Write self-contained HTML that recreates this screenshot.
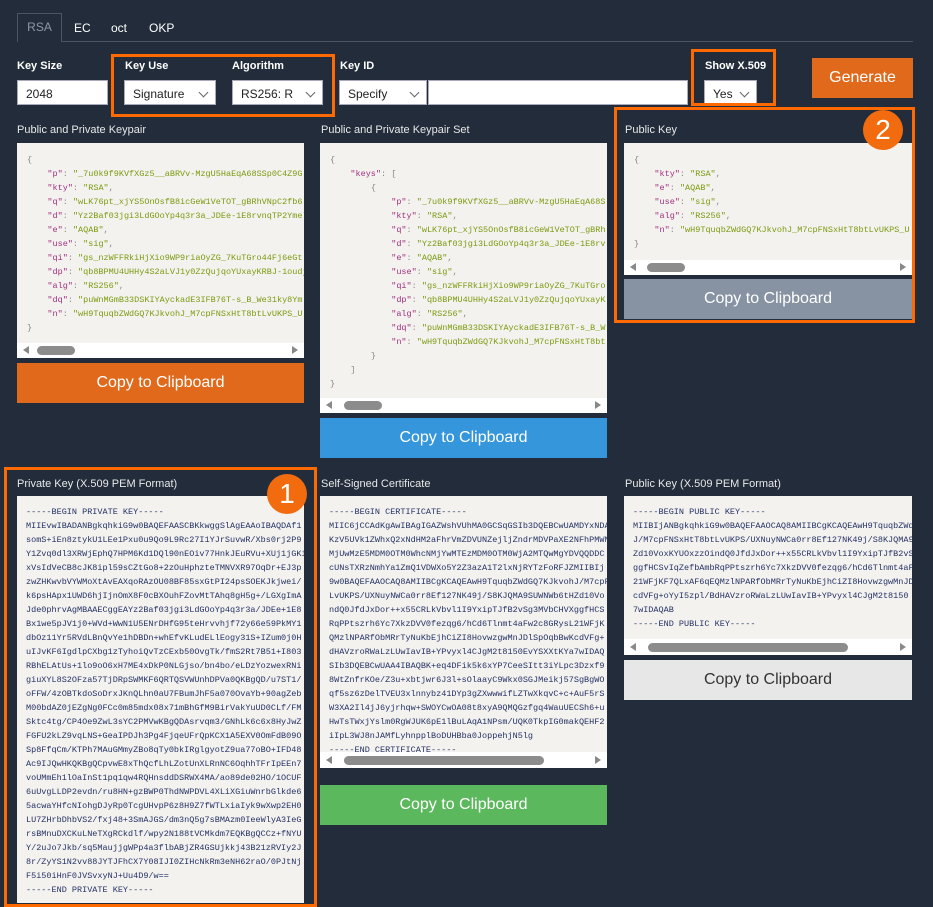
<!DOCTYPE html>
<html><head><meta charset="utf-8"><style>
*{box-sizing:border-box;margin:0;padding:0}
body{width:933px;height:903px;background:#222c3a;font-family:"Liberation Sans",Arial,sans-serif;position:relative;overflow:hidden;color:#fff}
.a{position:absolute}
.lbl{position:absolute;font-size:11px;font-weight:bold;color:#fff}
.sl{position:absolute;font-size:11px;color:#e8e8e8}
.in{position:absolute;background:#fff;border:1px solid #aab;color:#222;font-size:12px;padding:6px 8px;height:25px;white-space:nowrap;overflow:hidden}
.chev{position:absolute;right:8px;top:8px;width:7px;height:7px;border-right:1.4px solid #666;border-bottom:1.4px solid #666;transform:rotate(45deg)}
.box{position:absolute;background:#f4f2ef;overflow:hidden}
pre{font-family:"Liberation Mono",monospace;font-size:8.5px;line-height:14px;position:absolute;white-space:pre}
.k{color:#a0307f}.v{color:#7a9a10}.p{color:#888}
.pem{color:#243264}
.sb{position:absolute;left:0;right:0;bottom:0;height:15px;background:#fff}
.th{position:absolute;top:3px;height:9px;border-radius:5px;background:#8c8c8c}
.al{position:absolute;left:6px;top:3px;border-right:6px solid #888;border-top:4.5px solid transparent;border-bottom:4.5px solid transparent}
.ar{position:absolute;right:6px;top:3px;border-left:6px solid #888;border-top:4.5px solid transparent;border-bottom:4.5px solid transparent}
.btn{position:absolute;color:#fff;font-size:16px;text-align:center}
.ob{position:absolute;border:3px solid #ff6a00}
.circ{position:absolute;width:40px;height:40px;border-radius:50%;background:#f26b0f;color:#fff;font-size:28px;text-align:center;line-height:40px}
</style></head><body>
<div class="a" style="left:17px;top:41px;width:896px;height:1px;background:#4a5566"></div>
<div class="a" style="left:17px;top:13px;width:45px;height:29px;border:1px solid #4a5566;border-bottom:none;background:#222c3a;color:#8d97a5;font-size:12px;line-height:27px;text-align:center">RSA</div>
<div class="a" style="left:74px;top:21px;font-size:12px">EC</div>
<div class="a" style="left:111px;top:21px;font-size:12px">oct</div>
<div class="a" style="left:149px;top:21px;font-size:12px">OKP</div>

<div class="lbl" style="left:17px;top:60px">Key Size</div>
<div class="lbl" style="left:125px;top:60px">Key Use</div>
<div class="lbl" style="left:232px;top:60px">Algorithm</div>
<div class="lbl" style="left:340px;top:60px">Key ID</div>
<div class="lbl" style="left:705px;top:60px">Show X.509</div>
<div class="in" style="left:17px;top:80px;width:91px">2048</div>
<div class="in" style="left:124px;top:80px;width:92px">Signature<div class="chev"></div></div>
<div class="in" style="left:232px;top:80px;width:91px"><span style="display:inline-block;width:52px;overflow:hidden;vertical-align:top">RS256: RSA</span><div class="chev"></div></div>
<div class="in" style="left:339px;top:80px;width:88px">Specify<div class="chev"></div></div>
<div class="in" style="left:428px;top:80px;width:260px"></div>
<div class="in" style="left:704px;top:80px;width:53px">Yes<div class="chev"></div></div>
<div class="btn" style="left:812px;top:58px;width:101px;height:40px;line-height:40px;background:#e0691c">Generate</div>
<div class="ob" style="left:111px;top:54px;width:224px;height:63px"></div>
<div class="ob" style="left:691px;top:49px;width:85px;height:57px"></div>

<div class="sl" style="left:17px;top:124px">Public and Private Keypair</div>
<div class="box" style="left:17px;top:143px;width:287px;height:215px">
<pre style="left:10px;top:10px"><span class="p">{</span>
    <span class="k">"p"</span><span class="p">:</span> <span class="v">"_7u0k9f9KVfXGz5__aBRVv-MzgU5HaEqA68SSp0C4Z9G</span>
    <span class="k">"kty"</span><span class="p">:</span> <span class="v">"RSA"</span><span class="p">,</span>
    <span class="k">"q"</span><span class="p">:</span> <span class="v">"wLK76pt_xjYS5OnOsfB8icGeW1VeTOT_gBRhVNpC2fb6</span>
    <span class="k">"d"</span><span class="p">:</span> <span class="v">"Yz2Baf03jgi3LdGOoYp4q3r3a_JDEe-1E8rvnqTP2Ymel</span>
    <span class="k">"e"</span><span class="p">:</span> <span class="v">"AQAB"</span><span class="p">,</span>
    <span class="k">"use"</span><span class="p">:</span> <span class="v">"sig"</span><span class="p">,</span>
    <span class="k">"qi"</span><span class="p">:</span> <span class="v">"gs_nzWFFRkiHjXio9WP9riaOyZG_7KuTGro44Fj6eGt</span>
    <span class="k">"dp"</span><span class="p">:</span> <span class="v">"qb8BPMU4UHHy4S2aLVJ1y0ZzQujqoYUxayKRBJ-1oudj</span>
    <span class="k">"alg"</span><span class="p">:</span> <span class="v">"RS256"</span><span class="p">,</span>
    <span class="k">"dq"</span><span class="p">:</span> <span class="v">"puWnMGmB33DSKIYAyckadE3IFB76T-s_B_We31ky8Ym</span>
    <span class="k">"n"</span><span class="p">:</span> <span class="v">"wH9TquqbZWdGQ7KJkvohJ_M7cpFNSxHtT8btLvUKPS_U</span>
<span class="p">}</span></pre>
<div class="sb"><div class="al"></div><div class="th" style="left:20px;width:38px"></div><div class="ar"></div></div>
</div>
<div class="btn" style="left:17px;top:363px;width:287px;height:40px;line-height:40px;background:#e0691c">Copy to Clipboard</div>

<div class="sl" style="left:321px;top:124px">Public and Private Keypair Set</div>
<div class="box" style="left:320px;top:143px;width:287px;height:270px">
<pre style="left:10px;top:10px"><span class="p">{</span>
    <span class="k">"keys"</span><span class="p">: [</span>
        <span class="p">{</span>
            <span class="k">"p"</span><span class="p">:</span> <span class="v">"_7u0k9f9KVfXGz5__aBRVv-MzgU5HaEqA68S</span>
            <span class="k">"kty"</span><span class="p">:</span> <span class="v">"RSA"</span><span class="p">,</span>
            <span class="k">"q"</span><span class="p">:</span> <span class="v">"wLK76pt_xjYS5OnOsfB8icGeW1VeTOT_gBRh</span>
            <span class="k">"d"</span><span class="p">:</span> <span class="v">"Yz2Baf03jgi3LdGOoYp4q3r3a_JDEe-1E8rv</span>
            <span class="k">"e"</span><span class="p">:</span> <span class="v">"AQAB"</span><span class="p">,</span>
            <span class="k">"use"</span><span class="p">:</span> <span class="v">"sig"</span><span class="p">,</span>
            <span class="k">"qi"</span><span class="p">:</span> <span class="v">"gs_nzWFFRkiHjXio9WP9riaOyZG_7KuTGro</span>
            <span class="k">"dp"</span><span class="p">:</span> <span class="v">"qb8BPMU4UHHy4S2aLVJ1y0ZzQujqoYUxayK</span>
            <span class="k">"alg"</span><span class="p">:</span> <span class="v">"RS256"</span><span class="p">,</span>
            <span class="k">"dq"</span><span class="p">:</span> <span class="v">"puWnMGmB33DSKIYAyckadE3IFB76T-s_B_W</span>
            <span class="k">"n"</span><span class="p">:</span> <span class="v">"wH9TquqbZWdGQ7KJkvohJ_M7cpFNSxHtT8bt</span>
        <span class="p">}</span>
    <span class="p">]</span>
<span class="p">}</span></pre>
<div class="sb"><div class="al"></div><div class="th" style="left:24px;width:38px"></div><div class="ar"></div></div>
</div>
<div class="btn" style="left:320px;top:418px;width:287px;height:40px;line-height:40px;background:#3596db">Copy to Clipboard</div>

<div class="sl" style="left:625px;top:124px">Public Key</div>
<div class="box" style="left:624px;top:143px;width:288px;height:132px">
<pre style="left:10px;top:10px"><span class="p">{</span>
    <span class="k">"kty"</span><span class="p">:</span> <span class="v">"RSA"</span><span class="p">,</span>
    <span class="k">"e"</span><span class="p">:</span> <span class="v">"AQAB"</span><span class="p">,</span>
    <span class="k">"use"</span><span class="p">:</span> <span class="v">"sig"</span><span class="p">,</span>
    <span class="k">"alg"</span><span class="p">:</span> <span class="v">"RS256"</span><span class="p">,</span>
    <span class="k">"n"</span><span class="p">:</span> <span class="v">"wH9TquqbZWdGQ7KJkvohJ_M7cpFNSxHtT8btLvUKPS_U</span>
<span class="p">}</span></pre>
<div class="sb"><div class="al"></div><div class="th" style="left:23px;width:38px"></div><div class="ar"></div></div>
</div>
<div class="btn" style="left:624px;top:279px;width:288px;height:40px;line-height:40px;background:#8793a3">Copy to Clipboard</div>
<div class="ob" style="left:614px;top:107px;width:301px;height:216px"></div>
<div class="circ" style="left:863px;top:110px">2</div>

<div class="sl" style="left:17px;top:478px">Private Key (X.509 PEM Format)</div>
<div class="box" style="left:17px;top:496px;width:287px;height:407px">
<pre class="pem" style="left:9px;top:9px">-----BEGIN PRIVATE KEY-----
MIIEvwIBADANBgkqhkiG9w0BAQEFAASCBKkwggSlAgEAAoIBAQDAf1
somS+iEn8ztykU1LEe1Pxu0u9Qo9L9Rc27I1YJrSuvwR/Xbs0rj2P9
Y1Zvq0dl3XRWjEphQ7HPM6Kd1DQl90nEOiv77HnkJEuRVu+XUj1jGKi
xVsIdVeCB8cJK8ipl59sCZtGo8+2zOuHphzteTMNVXR97OqDr+EJ3p
zwZHKwvbVYWMoXtAvEAXqoRAzOU08BF85sxGtPI24psSOEKJkjwei/
k6psHApx1UWD6hjIjnOmX8F0cBXOuhFZovMtTAhq8gH5g+/LGXgImA
Jde0phrvAgMBAAECggEAYz2Baf03jgi3LdGOoYp4q3r3a/JDEe+1E8
Bx1we5pJV1j0+WVd+WwN1U5ENrDHfG95teHrvvhjf72y66e59PkMY1
dbOz11Yr5RVdLBnQvYe1hDBDn+whEfvKLudELlEogy31S+IZum0j0H
uIJvKF6IgdlpCXbg1zTyhoiQvTzCExb50OvgTk/fmS2Rt7B51+I803
RBhELAtUs+1lo9oO6xH7ME4xDkP0NLGjso/bn4bo/eLDzYozwexRNi
giuXYL8S2OFza57TjDRpSWMKF6QRTQSVWUnhDPVa0QKBgQD/u7ST1/
oFFW/4zOBTkdoSoDrxJKnQLhn0aU7FBumJhF5a070OvaYb+90agZeb
M00bdAZ0jEZgNg0FCc0m85mdx08x71mBhGfM9BirVakYuUD0CLf/FM
Sktc4tg/CP4Oe9ZwL3sYC2PMVwKBgQDAsrvqm3/GNhLk6c6x8HyJwZ
FGFU2kLZ9vqLNS+GeaIPDJh3Pg4FjqeUFrQpKCX1A5EXV0OmFdB09O
Sp8FfqCm/KTPh7MAuGMmyZBo8qTy0bkIRglgyotZ9ua77oBO+IFD48
Ac9IJQwHKQKBgQCpvwE8xThQcfLhLZotUnXLRnNC6OqhhTFrIpEEn7
voUMmEh1lOaInSt1pq1qw4RQHnsddDSRWX4MA/ao89de02HO/1OCUF
6uUvgLLDP2evdn/ru8HN+gzBWP0ThdNWPDVL4XLiXGiuWnrbGlkde6
5acwaYHfcNIohgDJyRp0TcgUHvpP6z8H9Z7fWTLxiaIyk9wXwp2EH0
LU7ZHrbDhbVS2/fxj48+3SmAJGS/dm3nQ5g7sBMAzm0IeeWlyA3IeG
rsBMnuDXCKuLNeTXgRCkdlf/wpy2N188tVCMkdm7EQKBgQCCz+fNYU
Y/2uJo7Jkb/sq5MaujjgWPp4a3flbABjZR4GSUjkkj43B21zRVIy2J
8r/ZyYS1N2vv88JYTJFhCX7Y08IJI0ZIHcNkRm3eNH62raO/0PJtNj
F5i50iHnF0JVSvxyNJ+Uu4D9/w==
-----END PRIVATE KEY-----</pre>
</div>
<div class="ob" style="left:4px;top:467px;width:313px;height:440px"></div>
<div class="circ" style="left:267px;top:474px">1</div>

<div class="sl" style="left:321px;top:478px">Self-Signed Certificate</div>
<div class="box" style="left:320px;top:496px;width:287px;height:272px">
<pre class="pem" style="left:9px;top:9px">-----BEGIN CERTIFICATE-----
MIIC6jCCAdKgAwIBAgIGAZWshVUhMA0GCSqGSIb3DQEBCwUAMDYxNDA
KzV5UVk1ZWhxQ2xNdHM2aFhrVmZDVUNZejljZndrMDVPaXE2NFhPMWN
MjUwMzE5MDM0OTM0WhcNMjYwMTEzMDM0OTM0WjA2MTQwMgYDVQQDDC
cUNsTXRzNmhYa1ZmQ1VDWXo5Y2Z3azA1T2lxNjRYTzFoRFJZMIIBIj
9w0BAQEFAAOCAQ8AMIIBCgKCAQEAwH9TquqbZWdGQ7KJkvohJ/M7cpF
LvUKPS/UXNuyNWCa0rr8Ef127NK49j/S8KJQMA9SUWNWb6tHZd10Vo
ndQ0JfdJxDor++x55CRLkVbvl1I9YxipTJfB2vSg3MVbCHVXggfHCS
RqPPtszrh6Yc7XkzDVV0fezqg6/hCd6Tlnmt4aFw2c8GRysL21WFjK
QMzlNPARfObMRrTyNuKbEjhCiZI8HovwzgwMnJDlSpOqbBwKcdVFg+
dHAVzroRWaLzLUwIavIB+YPvyxl4CJgM2t8150EvYSXXtKYa7wIDAQ
SIb3DQEBCwUAA4IBAQBK+eq4DFik5k6xYP7CeeSItt3iYLpc3Dzxf9
8WtZnfrKOe/Z3u+xbtjwr6J3l+sOlaayC9Wkx0SGJMeikj57SgBgWO
qf5sz6zDelTVEU3xlnnybz41DYp3gZXwwwifLZTwXkqvC+c+AuF5rS
W3XA2Il4jJ6yjrhqw+SWOYCwOA08t8xyA9QMQGzfgq4WauUECSh6+u
HwTsTWxjYslm0RgWJUK6pE1lBuLAqA1NPsm/UQK0TkpIG0makQEHF2
iIpL3WJ8nJAMfLyhnpplBoDUHBba0JoppehjN5lg
-----END CERTIFICATE-----</pre>
<div class="sb" style="height:16px"><div class="al" style="top:4px"></div><div class="th" style="left:24px;width:200px;top:4px"></div><div class="ar" style="top:4px"></div></div>
</div>
<div class="btn" style="left:320px;top:785px;width:287px;height:40px;line-height:40px;background:#5cb85c">Copy to Clipboard</div>

<div class="sl" style="left:625px;top:478px">Public Key (X.509 PEM Format)</div>
<div class="box" style="left:624px;top:496px;width:288px;height:159px">
<pre class="pem" style="left:9px;top:9px">-----BEGIN PUBLIC KEY-----
MIIBIjANBgkqhkiG9w0BAQEFAAOCAQ8AMIIBCgKCAQEAwH9TquqbZWd
J/M7cpFNSxHtT8btLvUKPS/UXNuyNWCa0rr8Ef127NK49j/S8KJQMA9
Zd10VoxKYUOxzzOindQ0JfdJxDor++x55CRLkVbvl1I9YxipTJfB2vS
ggfHCSvIqZefbAmbRqPPtszrh6Yc7XkzDVV0fezqg6/hCd6Tlnmt4aF
21WFjKF7QLxAF6qEQMzlNPARfObMRrTyNuKbEjhCiZI8HovwzgwMnJD
cdVFg+oYyI5zpl/BdHAVzroRWaLzLUwIavIB+YPvyxl4CJgM2t8150
7wIDAQAB
-----END PUBLIC KEY-----</pre>
<div class="sb" style="height:16px"><div class="al" style="top:4px"></div><div class="th" style="left:24px;width:200px;top:4px"></div><div class="ar" style="top:4px"></div></div>
</div>
<div class="btn" style="left:624px;top:660px;width:288px;height:40px;line-height:40px;background:#e7e7e7;color:#333">Copy to Clipboard</div>
</body></html>
